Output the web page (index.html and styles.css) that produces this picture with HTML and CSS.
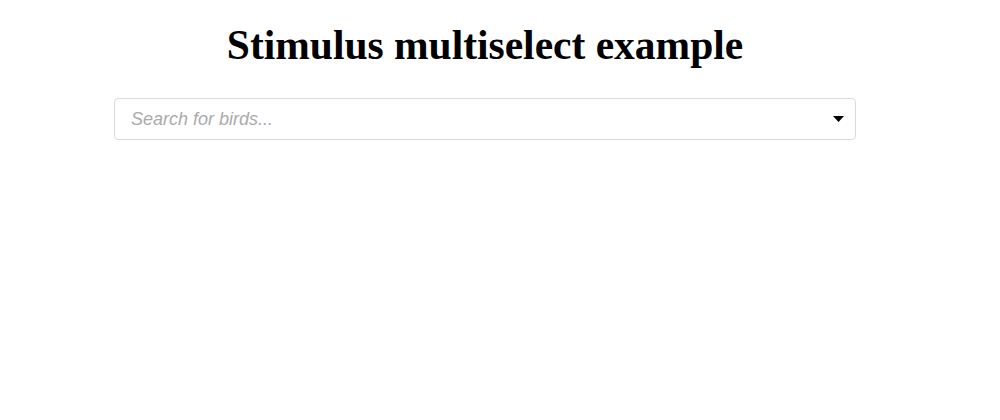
FILE: index.html
```html
<!DOCTYPE html>
<html>
<head>
<meta charset="utf-8">
<link rel="stylesheet" href="styles.css">
</head>
<body>
<div class="page">
  <h1 class="title">Stimulus multiselect example</h1>
  <div class="select">
    <input class="search" type="text" placeholder="Search for birds...">
    <svg class="arrow" width="11" height="6" viewBox="0 0 11 6"><polygon points="0,0 11,0 5.5,6" fill="#000"/></svg>
  </div>
</div>
</body>
</html>
```
FILE: styles.css
```css
html, body { margin: 0; padding: 0; background: #fff; }
.page {
  width: 970px;
  display: flex;
  flex-direction: column;
  align-items: center;
}
.title {
  font-family: "Liberation Serif", "Times New Roman", serif;
  font-weight: bold;
  font-size: 41.5px;
  line-height: 48px;
  margin: 21px 0 29px;
  color: #000;
}
.select {
  width: 742px;
  height: 42px;
  box-sizing: border-box;
  border: 1px solid #dcdcdc;
  border-radius: 4px;
  display: flex;
  align-items: center;
  padding: 0 11px 0 16px;
}
.search {
  flex: 1;
  border: none;
  outline: none;
  font-family: "Liberation Sans", Arial, sans-serif;
  font-size: 18px;
  padding: 0;
  background: transparent;
}
.search::placeholder { color: #ababab; font-style: italic; }
.arrow { display: block; }
```
